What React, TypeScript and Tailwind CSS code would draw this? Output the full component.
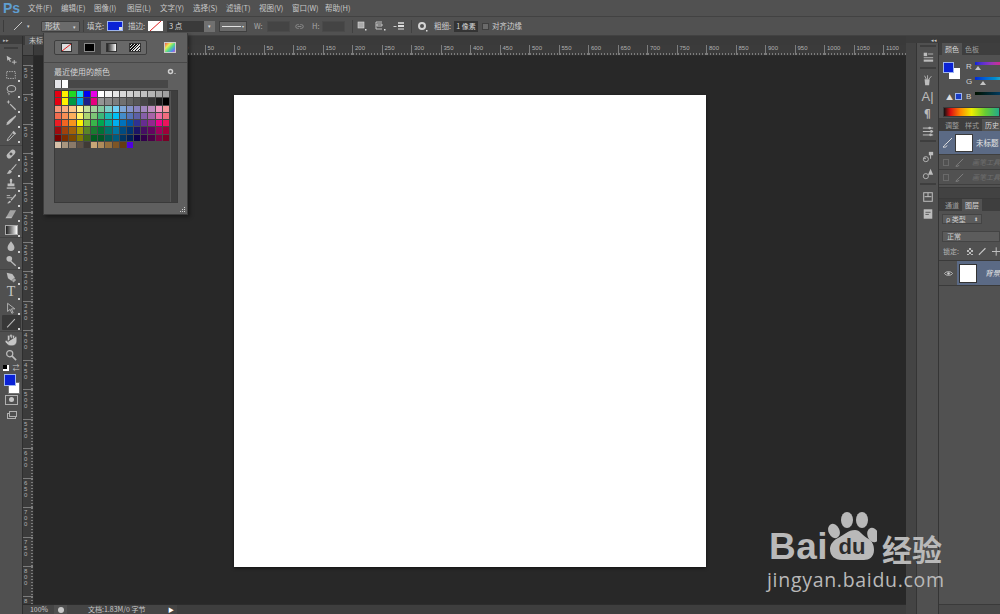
import type { ReactNode } from 'react';
import { Hand, Link2 } from 'lucide-react';

const menus = ['文件(F)', '编辑(E)', '图像(I)', '图层(L)', '文字(Y)', '选择(S)', '滤镜(T)', '视图(V)', '窗口(W)', '帮助(H)'];

const swatches = [
  ['#e60012', '#fff100', '#22d821', '#16d9ee', '#0000f0', '#e600e6', '#ffffff', '#f0f0f0', '#e4e4e4', '#d8d8d8', '#d0d0d0', '#c8c8c8', '#c0c0c0', '#b4b4b4', '#a8a8a8', '#a0a0a0'],
  ['#e60012', '#fff100', '#009944', '#00a0e9', '#1d2088', '#e4007f', '#959595', '#898989', '#7d7d7d', '#707070', '#626262', '#555555', '#464646', '#363636', '#1a1a1a', '#000000'],
  ['#f7977a', '#f9ad81', '#fdc68a', '#fff79a', '#c4df9b', '#a2d39c', '#82ca9d', '#7bcdc8', '#6ecff6', '#7ea7d8', '#8493ca', '#8882be', '#a187be', '#bc8dbf', '#f49ac2', '#f6989d'],
  ['#f26c4f', '#f68e55', '#fbaf5c', '#fff467', '#acd372', '#7cc576', '#3bb878', '#1abbb4', '#00bff3', '#438cca', '#5574b9', '#5c5fa5', '#855fa8', '#a763a8', '#ee6aa7', '#f26d7d'],
  ['#ed1c24', '#f26522', '#f7941d', '#fff200', '#8dc73f', '#39b54a', '#00a651', '#00a99d', '#00aeef', '#0072bc', '#0054a6', '#2e3192', '#662d91', '#92278f', '#ec008c', '#ed145b'],
  ['#9e0b0f', '#a0410d', '#a36209', '#aba000', '#598527', '#1a7b30', '#007236', '#00746b', '#0076a3', '#004b80', '#003471', '#1b1464', '#440e62', '#630460', '#9e005d', '#9e0039'],
  ['#790000', '#7b2e00', '#7d4900', '#827b00', '#406618', '#005e20', '#005826', '#005952', '#005b7f', '#003663', '#002157', '#0d004c', '#32004b', '#4b0049', '#7b0046', '#7a0026'],
  ['#d6c0a8', '#a9967f', '#8b7a69', '#5c5045', '#403a36', '#c8a677', '#ae8b5b', '#94703f', '#7d5526', '#653c12', '#5000e0'],
];

function Ico({ children, size = 12 }: { children: ReactNode; size?: number }) {
  return (
    <svg viewBox="0 0 14 14" width={size} height={size} fill="currentColor" stroke="none" className="text-[#bcbcbc]">
      {children}
    </svg>
  );
}

// sep holds the divider classes for tools that end a group
const tools: { icon: ReactNode; sep?: string; active?: boolean; more?: boolean }[] = [
  { icon: <Ico><path d="M2 2l6 3.400-2.300.7 1.200 2.600-1.200.5-1.200-2.600L2.700 8z" /><path d="M8 9.500h5.500M10.800 7v5" stroke="currentColor" strokeWidth="1.100" /></Ico> },
  { icon: <Ico><rect x="2" y="3" width="10" height="8" fill="none" stroke="currentColor" strokeWidth="1" strokeDasharray="1.600 1.200" /></Ico>, more: true },
  { icon: <Ico><ellipse cx="7.500" cy="5.500" rx="5" ry="3.700" fill="none" stroke="currentColor" strokeWidth="1.200" /><path d="M4 8.500c-1.500 1-1 2.500 1 2.500l-.5 2" fill="none" stroke="currentColor" strokeWidth="1" /></Ico>, more: true },
  { icon: <Ico><path d="M5.500 6.500l1-1 6.500 6.500-1 1z" /><path d="M4 1l.7 1.800L6.500 3.500l-1.800.7L4 6l-.7-1.800L1.500 3.500l1.800-.7z" /></Ico>, more: true },
  { icon: <Ico><path d="M12.500 1.500L13 3 7 9.500 4.500 12 1.500 13l1-3.500L5 7z" /></Ico>, more: true },
  { icon: <Ico><path d="M9 3l2 2-6 6.500-2.500 1 1-2.500z" fill="none" stroke="currentColor" strokeWidth="1.100" /><path d="M8.500 2.500l1.500-1.500 3 3-1.500 1.500z" /></Ico>, more: true, sep: 'border-b border-[#434343] pb-[2px]' },
  { icon: <Ico><g transform="rotate(-45 7 7)"><rect x="1" y="4" width="12" height="6" rx="3" /><rect x="5.500" y="5.500" width="3" height="3" fill="#555" /></g></Ico>, more: true },
  { icon: <Ico><path d="M13 1L7 7.500l1 1L13.500 2z" /><path d="M6 8c-2 .5-1.500 2.500-4 4.500 3 .5 5.500-.5 6-3z" /></Ico>, more: true },
  { icon: <Ico><path d="M5.500 2.500a1.500 1.500 0 013 0c0 1.500-1 2.500-.5 4h3v3h-8v-3h3c.5-1.500-.5-2.500-.5-4z" /><rect x="2" y="11" width="10" height="1.500" /></Ico>, more: true },
  { icon: <Ico><path d="M12.500 1L6.500 8l1 1L13 3z" /><path d="M5.500 9c-1.500.5-1.500 2-3 3 2 .5 4-.5 4.500-2z" /><path d="M2 5.500h6M2 3h4" stroke="currentColor" strokeWidth="1" /></Ico>, more: true },
  { icon: <Ico><path d="M6 2.500h7l-4 7H2z" opacity="0.75" /><path d="M2 9.500h7l-1.500 2.500h-7z" /></Ico>, more: true },
  { icon: <div className="w-[13px] h-[10px] border border-[#aaa] bg-gradient-to-r from-[#222] to-white" />, more: true, sep: 'border-b border-[#434343]' },
  { icon: <Ico><path d="M7 1.500c2 3 4 4.800 4 7.200a4 4 0 01-8 0c0-2.400 2-4.200 4-7.200z" /></Ico>, more: true },
  { icon: <Ico><circle cx="5" cy="4.500" r="3.300" /><path d="M7 6.500l6 5.500-1 1-6-5.500z" /></Ico>, more: true, sep: 'border-b border-[#434343]' },
  { icon: <Ico><path d="M2 2l6.500 1.500 3 4-4 4-4-3z" /><path d="M8 11.500l3-3 2 2-3 3z" opacity=".8" /></Ico>, more: true },
  { icon: <span className="font-['Liberation_Serif',serif] text-[14px] leading-none text-[#c6c6c6]">T</span>, more: true },
  { icon: <Ico><path d="M3 1.500l8.500 6.500H7.500l2 4.500-1.500.7-2-4.600L3 11z" fill="none" stroke="currentColor" strokeWidth="1" /></Ico>, more: true },
  { icon: <Ico><path d="M2.500 12L11.500 2.500" stroke="currentColor" strokeWidth="1.200" /></Ico>, more: true, active: true, sep: 'border-b border-[#434343] pb-px' },
  { icon: <Hand size={14} className="text-[#505050]" fill="#c6c6c6" strokeWidth={1} /> },
  { icon: <Ico><circle cx="5.500" cy="5.500" r="3.600" fill="none" stroke="currentColor" strokeWidth="1.400" /><path d="M8 8l5 5" stroke="currentColor" strokeWidth="1.800" /></Ico> },
];

function Tools() {
  return (
    <div className="w-[23px] shrink-0 bg-[#505050] flex flex-col items-center border-r border-[#2e2e2e]">
      <div className="w-full h-[8px] bg-[#3d3d3d] text-[5px] leading-[8px] pl-[3px] text-[#bbb]">▸▸</div>
      <div className="w-[14px] h-[2px] border-y border-[#3e3e3e] mt-[3px] mb-[3px]" />
      {tools.map((t, i) => (
        <div key={i} className={`w-full flex flex-col items-center ${t.sep ?? ''}`}>
          <div className={`relative w-[19px] h-[15.200px] flex items-center justify-center ${t.active ? 'bg-[#383838] rounded-[1px]' : ''}`}>
            {t.icon}
            {t.more && <span className="absolute right-px bottom-0 w-[2px] h-[2px] bg-[#d0d0d0]" />}
          </div>
        </div>
      ))}
      {/* default colours */}
      <div className="w-[19px] h-[8px] mt-[1px] flex items-center justify-between px-[1px]">
        <div className="relative w-[6px] h-[6px] bg-white">
          <span className="absolute left-0 top-0 w-[4px] h-[4px] bg-black" />
        </div>
        <span className="text-[7px] leading-none text-[#c6c6c6]">⇄</span>
      </div>
      <div className="relative w-[19px] h-[20px] mt-[2px]">
        <span className="absolute right-[1px] bottom-0 w-[12px] h-[12px] bg-white border border-[#777]" />
        <span className="absolute left-[2px] top-0 w-[12px] h-[12px] bg-[#0a22d6] border border-[#9db4ee]" />
      </div>
      <div className="w-[13px] h-[10px] mt-[1px] border border-[#b0b0b0] flex items-center justify-center">
        <span className="w-[5px] h-[5px] rounded-full bg-[#c6c6c6]" />
      </div>
      <div className="relative w-[19px] h-[11px] mt-[6px] flex items-center justify-center">
        <span className="w-[9px] h-[6px] border border-[#b0b0b0]" />
        <span className="absolute left-[7px] top-0 w-[8px] h-[6px] border border-[#b0b0b0] bg-[#505050]" />
      </div>
    </div>
  );
}

function OptionSelect({ label, w }: { label: string; w: string }) {
  return (
    <div className={`${w} h-[11px] bg-[#6b6b6b] border border-[#3f3f3f] rounded-[1px] flex items-center justify-between px-[3px] text-[7.500px] text-[#d8d8d8]`}>
      <span>{label}</span>
      <span className="text-[5px] leading-none">▾</span>
    </div>
  );
}

function OptionsBar() {
  return (
    <div className="h-[20px] shrink-0 bg-[#515151] border-t border-[#424242] border-b flex items-center text-[7.500px] text-[#cfcfcf]">
      <div className="w-[3px] h-[12px] ml-[3px] border-l border-[#3c3c3c]" />
      <svg width="10" height="10" viewBox="0 0 10 10" className="ml-[7px]"><path d="M1 9L9 1" stroke="#c8c8c8" strokeWidth="1" /></svg>
      <span className="ml-[4px] w-[4px] text-[5px] text-[#ccc]">▾</span>
      <div className="ml-[10px]"><OptionSelect label="形状" w="w-[39px]" /></div>
      <div className="w-px h-[12px] bg-[#414141] ml-[3px]" />
      <span className="ml-[3px] w-[19px]">填充:</span>
      <div className="relative w-[16px] h-[10px] bg-[#0a22d6] border border-[#9db4ee] ml-[1px]">
        <span className="absolute right-0 bottom-0 w-[3px] h-[3px] bg-[#ddd]" />
      </div>
      <span className="ml-[5px] w-[20px]">描边:</span>
      <div className="w-[15px] h-[10px] bg-white overflow-hidden">
        <svg width="15" height="10" viewBox="0 0 15 10"><path d="M2 10L13 0" stroke="#d22" strokeWidth="1" /></svg>
      </div>
      <div className="ml-[4px] w-[37px] h-[11px] bg-[#3a3a3a] px-[2px] flex items-center text-[#d8d8d8]">3 点</div>
      <div className="w-[11px] h-[11px] bg-[#707070] flex items-center justify-center text-[5px] text-[#ddd]">▾</div>
      <div className="ml-[4px] w-[28px] h-[11px] bg-[#6b6b6b] border border-[#3f3f3f] flex items-center gap-[1px] px-[2px]">
        <span className="flex-1 h-px bg-[#e2e2e2]" />
        <span className="text-[4px] text-[#ddd] leading-none">▾</span>
      </div>
      <span className="ml-[7px] w-[13px] text-[#a8a8a8]">W:</span>
      <div className="w-[23px] h-[11px] bg-[#444] border border-[#4a4a4a]" />
      <Link2 size={9} className="ml-[5px] text-[#9a9a9a]" />
      <span className="ml-[8px] w-[10px] text-[#a8a8a8]">H:</span>
      <div className="w-[23px] h-[11px] bg-[#444] border border-[#4a4a4a]" />
      <div className="w-px h-[13px] bg-[#414141] ml-[7px]" />
      <svg width="10" height="10" viewBox="0 0 10 10" className="ml-[4px]"><rect x="1" y="1" width="6" height="6" fill="#aaa" stroke="#ddd" strokeWidth=".6" /><rect x="8" y="8" width="1.500" height="1.500" fill="#ddd" /></svg>
      <svg width="11" height="10" viewBox="0 0 11 10" className="ml-[8px]"><path d="M1 1h6M1 1v7h6M2 3h5v2H2z" fill="none" stroke="#cfcfcf" strokeWidth=".9" /><rect x="9" y="8" width="1.500" height="1.500" fill="#ddd" /></svg>
      <svg width="13" height="11" viewBox="0 0 13 11" className="ml-[7px]"><rect x="5" y="1" width="6" height="2" fill="#bbb" /><rect x="5" y="4" width="6" height="2" fill="#ddd" /><rect x="5" y="7" width="6" height="2" fill="#999" /><path d="M0.500 5.500h3" stroke="#ccc" strokeWidth="1" /></svg>
      <div className="w-px h-[13px] bg-[#414141] ml-[5px]" />
      <svg width="11" height="11" viewBox="0 0 11 11" className="ml-[5px]"><circle cx="5" cy="5" r="3" fill="none" stroke="#d4d4d4" strokeWidth="2" /><rect x="9" y="9" width="1.500" height="1.500" fill="#ddd" /></svg>
      <span className="ml-[6px] w-[20px]">粗细:</span>
      <div className="w-[24px] h-[11px] bg-[#343434] flex items-center justify-center text-[#d8d8d8] text-[7px]">1 像素</div>
      <div className="ml-[4px] w-[7px] h-[7px] bg-[#6a6a6a] border border-[#3f3f3f]" />
      <span className="ml-[3px]">对齐边缘</span>
    </div>
  );
}

function HRuler() {
  const marks = [];
  for (let v = -300; v <= 1100; v += 50) marks.push(Math.abs(v));
  return (
    <div className="h-[11px] shrink-0 flex bg-[#3b3b3b] overflow-hidden border-b border-[#2c2c2c]">
      <div className="w-[11px] shrink-0 bg-[#4a4a4a] border-r border-[#2c2c2c]" />
      <div className="w-[23px] shrink-0 relative" />
      {marks.map((m, i) => (
        <div key={i} className="w-[29.500px] shrink-0 relative border-l border-[#7c7c7c]">
          <span className="block pl-[2px] text-[6px] leading-[7px] text-[#b0b0b0] font-['Liberation_Sans',sans-serif]">{m}</span>
          <span className="absolute left-0 right-0 bottom-0 h-[2px] bg-[repeating-linear-gradient(90deg,#7c7c7c_0,#7c7c7c_1px,transparent_1px,transparent_3px)]" />
        </div>
      ))}
    </div>
  );
}

function VRuler() {
  const marks = [];
  for (let v = -50; v <= 800; v += 50) marks.push(String(Math.abs(v)));
  marks.push('8');
  return (
    <div className="w-[11px] shrink-0 bg-[#3b3b3b] overflow-hidden border-r border-[#2c2c2c] flex flex-col">
      <div className="h-[8.500px] shrink-0" />
      {marks.map((m, i) => (
        <div key={i} className="h-[29.500px] shrink-0 relative border-t border-[#7c7c7c]">
          <div className="pl-[1px] pt-[1px] flex flex-col text-[6px] leading-[6px] text-[#b0b0b0] font-['Liberation_Sans',sans-serif]">
            {m.split('').map((d, j) => <span key={j}>{d}</span>)}
          </div>
          <span className="absolute top-0 bottom-0 right-0 w-[2px] bg-[repeating-linear-gradient(180deg,#7c7c7c_0,#7c7c7c_1px,transparent_1px,transparent_3px)]" />
        </div>
      ))}
    </div>
  );
}

function StatusBar() {
  return (
    <div className="h-[10px] shrink-0 flex items-center bg-[#3e3e3e] text-[7px] leading-[9px] text-[#c8c8c8] border-t border-[#2c2c2c]">
      <div className="w-[31px] h-full bg-[#454545] flex items-center justify-end pr-[6px]">100%</div>
      <div className="w-[13px] h-full bg-[#505050] flex items-center justify-center">
        <span className="w-[6px] h-[6px] rounded-full bg-[#c8c8c8]" />
      </div>
      <div className="w-[110px] h-full bg-[#454545] flex items-center pl-[21px] pr-[3px] justify-between">
        <span>文档:1.83M/0 字节</span>
        <span className="text-[6px] text-white leading-none">▶</span>
      </div>
    </div>
  );
}

function DocArea() {
  return (
    <div className="flex-1 min-w-0 flex flex-col">
      <div className="h-[9px] shrink-0 bg-[#3a3a3a] flex">
        <div className="w-[20px] ml-[2px] bg-[#4f4f4f] text-[7px] leading-[9px] pl-[4px] text-[#c8c8c8]">未标</div>
      </div>
      <HRuler />
      <div className="flex-1 min-h-0 flex">
        <VRuler />
        <div className="flex-1 bg-[#282828] flex justify-center items-start pt-[39px]">
          <div className="w-[472px] h-[472px] bg-white shadow-[0_1px_3px_rgba(0,0,0,0.6)]" />
        </div>
      </div>
      <StatusBar />
    </div>
  );
}

function StripSep({ className }: { className: string }) {
  return <div className={`w-[16px] h-[2px] shrink-0 border-y border-[#3e3e3e] ${className}`} />;
}

function IconStrip() {
  const box = 'w-[22px] h-[17px] shrink-0 flex items-center justify-center';
  return (
    <div className="w-[23px] shrink-0 bg-[#505050] border-x border-[#353535] flex flex-col items-center">
      <StripSep className="mt-[2px] mb-[1px]" />
      <div className={box}><Ico><rect x="2" y="2" width="4" height="4" /><rect x="7" y="3" width="6" height="1" /><rect x="2" y="7" width="11" height="1.500" opacity=".7" /><rect x="2" y="10" width="11" height="2.500" /></Ico></div>
      <StripSep className="mt-[2px] mb-[2px]" />
      <div className={box}><Ico><path d="M3 6h6l-.7 7H3.700z" /><path d="M5 6l-2-4M6.500 6V1.500M8 6l3-3.500" stroke="currentColor" strokeWidth="1" /></Ico></div>
      <div className={`${box} text-[13px] leading-none text-[#bcbcbc] font-['Liberation_Sans',sans-serif]`}>A|</div>
      <div className={`${box} text-[11px] leading-none text-[#bcbcbc] font-bold`}>¶</div>
      <div className={box}><Ico><rect x="1" y="3" width="12" height="1.200" /><circle cx="9" cy="3.500" r="1.600" /><rect x="1" y="7" width="12" height="1.200" /><circle cx="11" cy="7.500" r="1.600" /><rect x="1" y="11" width="12" height="1.200" /><circle cx="10" cy="11.500" r="1.600" /></Ico></div>
      <StripSep className="mt-[1px] mb-[6px]" />
      <div className={box}><Ico><circle cx="4.500" cy="9.500" r="3" fill="none" stroke="currentColor" strokeWidth="1" /><circle cx="3.500" cy="8.500" r="1" /><path d="M8 1h5v4H8z" /><path d="M10 3v6" stroke="currentColor" strokeWidth="1.200" /></Ico></div>
      <div className={box}><Ico><circle cx="4.500" cy="9.500" r="3" fill="none" stroke="currentColor" strokeWidth="1" /><path d="M10 1l3 7H7zM8.500 6h3" /></Ico></div>
      <StripSep className="mt-[1px] mb-[3px]" />
      <div className={box}><Ico><rect x="2" y="2" width="10" height="10" fill="none" stroke="currentColor" strokeWidth="1.200" /><rect x="3" y="6" width="8" height="1.200" /><rect x="6.400" y="2" width="1.200" height="5" /></Ico></div>
      <div className={box}><Ico><rect x="2" y="1.500" width="10" height="11" /><path d="M4 5h6M4 7.500h4" stroke="#505050" strokeWidth="1" /></Ico></div>
    </div>
  );
}

function PanelTabs({ tabs, active }: { tabs: string[]; active: number }) {
  return (
    <div className="h-[12px] shrink-0 bg-[#3e3e3e] flex overflow-hidden pl-[3px] text-[7px] text-[#9e9e9e]">
      {tabs.map((t, i) => (
        <div key={t} className={`shrink-0 px-[3px] leading-[12px] ${i === active ? 'bg-[#525252] text-[#d6d6d6]' : ''}`}>{t}</div>
      ))}
    </div>
  );
}

function Slider({ label, bar, thumb }: { label: string; bar: string; thumb?: string }) {
  return (
    <div className="flex items-start h-[15px]">
      <span className="w-[9px] text-[8px] leading-[10px] text-[#d0d0d0] font-['Liberation_Sans',sans-serif]">{label}</span>
      <div className="flex-1">
        <div className={`h-[3px] ${bar}`} />
        {thumb && <div className={`${thumb} w-0 h-0 mt-[1px] border-x-[3px] border-x-transparent border-b-[4px] border-b-[#c4c4c4]`} />}
      </div>
    </div>
  );
}

function HistoryRow({ label }: { label: string }) {
  return (
    <div className="h-[15px] shrink-0 flex items-center border-t border-[#3f3f3f] text-[7px] italic text-[#6e6e6e]">
      <span className="ml-[4px] w-[7px] h-[7px] border border-[#6a6a6a]" />
      <svg width="11" height="11" viewBox="0 0 11 11" className="ml-[6px]"><path d="M10 1L4 7M4 7C2.500 7.500 3 9 1 10c2 .5 3.500 0 4-1.500" fill="none" stroke="#8a8a8a" strokeWidth="1" /></svg>
      <span className="ml-[8px] whitespace-nowrap">{label}</span>
    </div>
  );
}

function Panels() {
  return (
    <div className="flex-1 min-w-0 bg-[#515151] flex flex-col overflow-hidden text-[#cfcfcf]">
      <PanelTabs tabs={['颜色', '色板']} active={0} />
      <div className="h-[64px] shrink-0 px-[4px] pt-[7px] flex flex-col border-b border-[#3c3c3c]">
        <div className="flex h-[30px] shrink-0">
          <div className="relative w-[23px] shrink-0">
            <span className="absolute left-[6px] top-[6px] w-[11px] h-[11px] bg-white" />
            <span className="absolute left-0 top-0 w-[11px] h-[11px] bg-[#0a22d6] border border-[#9db4ee]" />
          </div>
          <div className="flex-1 flex flex-col -mr-[4px]">
            <Slider label="R" bar="bg-gradient-to-r from-[#0022d6] via-[#8030c8] to-[#d02890]" thumb="ml-[0px]" />
            <Slider label="G" bar="bg-gradient-to-r from-[#0a22d6] to-[#20a0c8]" thumb="ml-[5px]" />
          </div>
        </div>
        <div className="flex h-[15px] shrink-0 items-start">
          <span className="w-[7px] ml-[3px] mt-[2px] text-[7px] leading-none text-[#ddd]">▲</span>
          <span className="w-[7px] h-[7px] bg-[#1a3cc4] border border-[#9db4ee] ml-[2px] mt-[1px]" />
          <div className="flex-1 flex flex-col ml-[4px] -mr-[4px]">
            <Slider label="B" bar="bg-gradient-to-r from-[#001000] to-[#003a60]" />
          </div>
        </div>
        <div className="h-[10px] shrink-0 -mr-[4px] border border-[#3a3a3a] bg-[linear-gradient(90deg,#111_0,#d11_12%,#f80_30%,#ee0_50%,#6c3_75%,#2a8_100%)]" />
      </div>
      <PanelTabs tabs={['调整', '样式', '历史']} active={2} />
      <div className="h-[23px] shrink-0 bg-[#5b6a85] flex items-center">
        <svg width="11" height="11" viewBox="0 0 11 11" className="ml-[3px] shrink-0"><path d="M10 1L4 7M4 7C2.500 7.500 3 9 1 10c2 .5 3.500 0 4-1.500" fill="none" stroke="#ddd" strokeWidth="1" /></svg>
        <span className="ml-[2px] w-[18px] h-[18px] shrink-0 bg-white border border-[#3a3a3a]" />
        <span className="ml-[3px] text-[7.500px] whitespace-nowrap text-[#e6e6e6]">未标题</span>
      </div>
      <HistoryRow label="画笔工具" />
      <HistoryRow label="画笔工具" />
      <div className="h-[3px] shrink-0 border-t border-[#3f3f3f]" />
      <div className="h-[12px] shrink-0 bg-[#424242] border-y border-[#3a3a3a]" />
      <PanelTabs tabs={['通道', '图层']} active={1} />
      <div className="h-[10px] mt-[3px] ml-[3px] shrink-0 w-[40px] bg-[#5c5c5c] border border-[#444] flex items-center justify-between px-[3px] text-[7px]">
        <span>ρ 类型</span>
        <span className="text-[5px]">⬍</span>
      </div>
      <div className="h-[11px] mt-[7px] ml-[3px] shrink-0 bg-[#5c5c5c] border border-[#444] flex items-center px-[4px] text-[7px]">正常</div>
      <div className="h-[19px] shrink-0 flex items-center pl-[4px] text-[7px] text-[#b5b5b5] border-b border-[#3a3a3a]">
        <span className="w-[18px]">锁定:</span>
        <div className="w-[7px] h-[7px] ml-[7px] bg-[repeating-conic-gradient(#bbb_0_25%,#555_0_50%)] bg-[length:4px_4px]" />
        <svg width="9" height="9" viewBox="0 0 9 9" className="ml-[5px]"><path d="M8 1L3 6 1 8" stroke="#c6c6c6" strokeWidth="1.300" /></svg>
        <svg width="9" height="9" viewBox="0 0 9 9" className="ml-[5px]"><path d="M4.500 0v9M0 4.500h9" stroke="#c6c6c6" strokeWidth="1" /></svg>
      </div>
      <div className="h-[25px] shrink-0 flex items-center border-b border-[#3a3a3a]">
        <div className="w-[19px] h-full flex items-center justify-center">
          <svg width="9" height="7" viewBox="0 0 9 7"><path d="M0.500 3.500C2 1 7 1 8.500 3.500 7 6 2 6 0.500 3.500z" fill="none" stroke="#d0d0d0" strokeWidth=".8" /><circle cx="4.500" cy="3.500" r="1.300" fill="#d0d0d0" /></svg>
        </div>
        <div className="flex-1 h-full bg-[#5b6a85] flex items-center pl-[2px]">
          <span className="w-[18px] h-[19px] bg-white border border-[#333] shrink-0" />
          <span className="ml-[8px] text-[7.500px] italic text-[#e6e6e6] whitespace-nowrap">背景</span>
        </div>
      </div>
      <div className="flex-1" />
      <div className="h-[10px] shrink-0 border-t border-[#3a3a3a] bg-[#4a4a4a]" />
    </div>
  );
}

function ColorPopup() {
  return (
    <div className="absolute left-[43px] top-[33px] w-[145px] h-[182px] bg-[#5f5f5f] border-x border-b border-[#3c3c3c] px-[10px] shadow-[2px_2px_4px_rgba(0,0,0,0.4)] flex flex-col text-[#d4d4d4]">
      <div className="h-[29px] shrink-0 flex items-center justify-between">
        <div className="w-[93px] h-[15px] flex border border-[#3e3e3e] rounded-[2px] bg-[#686868]">
          <div className="w-[23px] flex items-center justify-center"><span className="w-[11px] h-[9px] bg-[#ddd] border border-[#333] overflow-hidden"><svg width="9" height="7" viewBox="0 0 9 7"><path d="M0 7L9 0" stroke="#d22" strokeWidth="1" /></svg></span></div>
          <div className="w-[23px] bg-[#414141] flex items-center justify-center"><span className="w-[11px] h-[9px] bg-black border border-[#888]" /></div>
          <div className="w-[23px] flex items-center justify-center"><span className="w-[11px] h-[9px] border border-[#333] bg-gradient-to-r from-[#222] to-white" /></div>
          <div className="w-[23px] flex items-center justify-center"><span className="w-[12px] h-[9px] border border-[#333] bg-[repeating-linear-gradient(135deg,#111_0,#111_1px,#ddd_1px,#ddd_2px)]" /></div>
        </div>
        <div className="mr-[1px] w-[12px] h-[11px] border border-[#ccc] bg-[linear-gradient(135deg,#e55_0,#ee5_30%,#5d8_55%,#58e_80%,#c5c_100%)]" />
      </div>
      <div className="h-px shrink-0 -mx-[10px] bg-[#484848]" />
      <div className="h-[17px] shrink-0 flex items-center justify-between text-[8px]">
        <span>最近使用的颜色</span>
        <svg width="9" height="7" viewBox="0 0 9 7" className="mr-[1px]"><circle cx="3.500" cy="3.500" r="2" fill="none" stroke="#d0d0d0" strokeWidth="1.500" /><rect x="7.500" y="5" width="1" height="1" fill="#d0d0d0" /></svg>
      </div>
      <div className="w-[114px] h-[8px] shrink-0 bg-[#474747] flex gap-px pl-px">
        <span className="w-[6px] h-[8px] bg-[#e4e4e8]" />
        <span className="w-[6px] h-[8px] bg-white" />
      </div>
      <div className="w-[124px] h-[113px] shrink-0 mt-[2px] bg-[#484848] border border-[#3a3a3a] flex">
        <div className="w-[115px] shrink-0 flex flex-col gap-px">
          {swatches.map((row, r) => (
            <div key={r} className="flex gap-px">
              {row.map((c, i) => <span key={i} className="w-[6.200px] h-[6.300px] shrink-0" style={{ backgroundColor: c }} />)}
            </div>
          ))}
        </div>
        <div className="flex-1 bg-[#3e3e3e] border-l border-[#555]" />
      </div>
      <div className="flex-1 flex items-end justify-end -mr-[8px] pb-[1px]">
        <svg width="6" height="6" viewBox="0 0 6 6"><path d="M5 0h1v1H5zM3 2h1v1H3zM5 2h1v1H5zM1 4h1v1H1zM3 4h1v1H3zM5 4h1v1H5z" fill="#cfcfcf" /></svg>
      </div>
    </div>
  );
}

function Watermark() {
  return (
    <div className="absolute left-[766px] top-[506px] w-[182px] h-[86px] text-[#b9b9b9] font-['Liberation_Sans',sans-serif]">
      <div className="flex items-end h-[58px]">
        <span className="text-[37px] font-bold leading-[34px] tracking-[0.5px] pl-[3px]">Bai</span>
        <svg width="50" height="58" viewBox="0 0 50 58" className="-ml-[1px] shrink-0">
          <ellipse cx="20" cy="14" rx="6" ry="8" fill="#b9b9b9" />
          <ellipse cx="35" cy="14" rx="6" ry="8" fill="#b9b9b9" />
          <ellipse cx="7" cy="25" rx="5.500" ry="7.500" transform="rotate(-25 7 25)" fill="#b9b9b9" />
          <ellipse cx="46" cy="29" rx="5.500" ry="7.500" transform="rotate(-20 46 29)" fill="#b9b9b9" />
          <path d="M28 24c5 0 7 5 12 8 6 3 7 8 7 12 0 7-5 10-10 10H15C8 54 3 50 3 43c0-5 4-9 8-11 6-3 10-8 17-8z" fill="#b9b9b9" />
          <text x="25" y="48" textAnchor="middle" fontSize="22" fontWeight="bold" fill="#2c2c2c" fontFamily="Liberation Sans, sans-serif">du</text>
        </svg>
        <span className="text-[30px] font-bold leading-[32px] ml-[5px] font-['Noto_Sans_CJK_SC',sans-serif] whitespace-nowrap">经验</span>
      </div>
      <div className="mt-[5px] text-[19.500px] leading-[22px] tracking-[0.7px] pl-[1px] font-['Open_Sans',sans-serif]">jingyan.baidu.com</div>
    </div>
  );
}

export default function App() {
  return (
    <div className="relative w-[1000px] h-[614px] overflow-hidden flex flex-col bg-[#515151] font-['Noto_Sans_CJK_SC','Liberation_Sans',sans-serif]">
      <div className="h-[16px] shrink-0 flex items-center text-[7.500px] text-[#c8c8c8]">
        <span className="w-[28px] pl-[3px] text-[14px] font-bold text-[#5f9ed1] leading-none font-['Liberation_Sans',sans-serif]">Ps</span>
        <div className="flex gap-[10px]">
          {menus.map((m) => <span key={m} className="w-[23px] whitespace-nowrap">{m}</span>)}
        </div>
      </div>
      <OptionsBar />
      <div className="flex-1 min-h-0 flex">
        <Tools />
        <DocArea />
        <div className="w-[94px] shrink-0 flex flex-col">
          <div className="h-[7px] shrink-0 bg-[#3c3c3c] text-[5px] leading-[7px] text-right pr-[63px] text-[#ccc]">◂◂</div>
          <div className="flex-1 min-h-0 flex">
            <div className="w-[10px] shrink-0 bg-[#444]" />
            <IconStrip />
            <Panels />
          </div>
        </div>
      </div>
      <ColorPopup />
      <Watermark />
    </div>
  );
}
